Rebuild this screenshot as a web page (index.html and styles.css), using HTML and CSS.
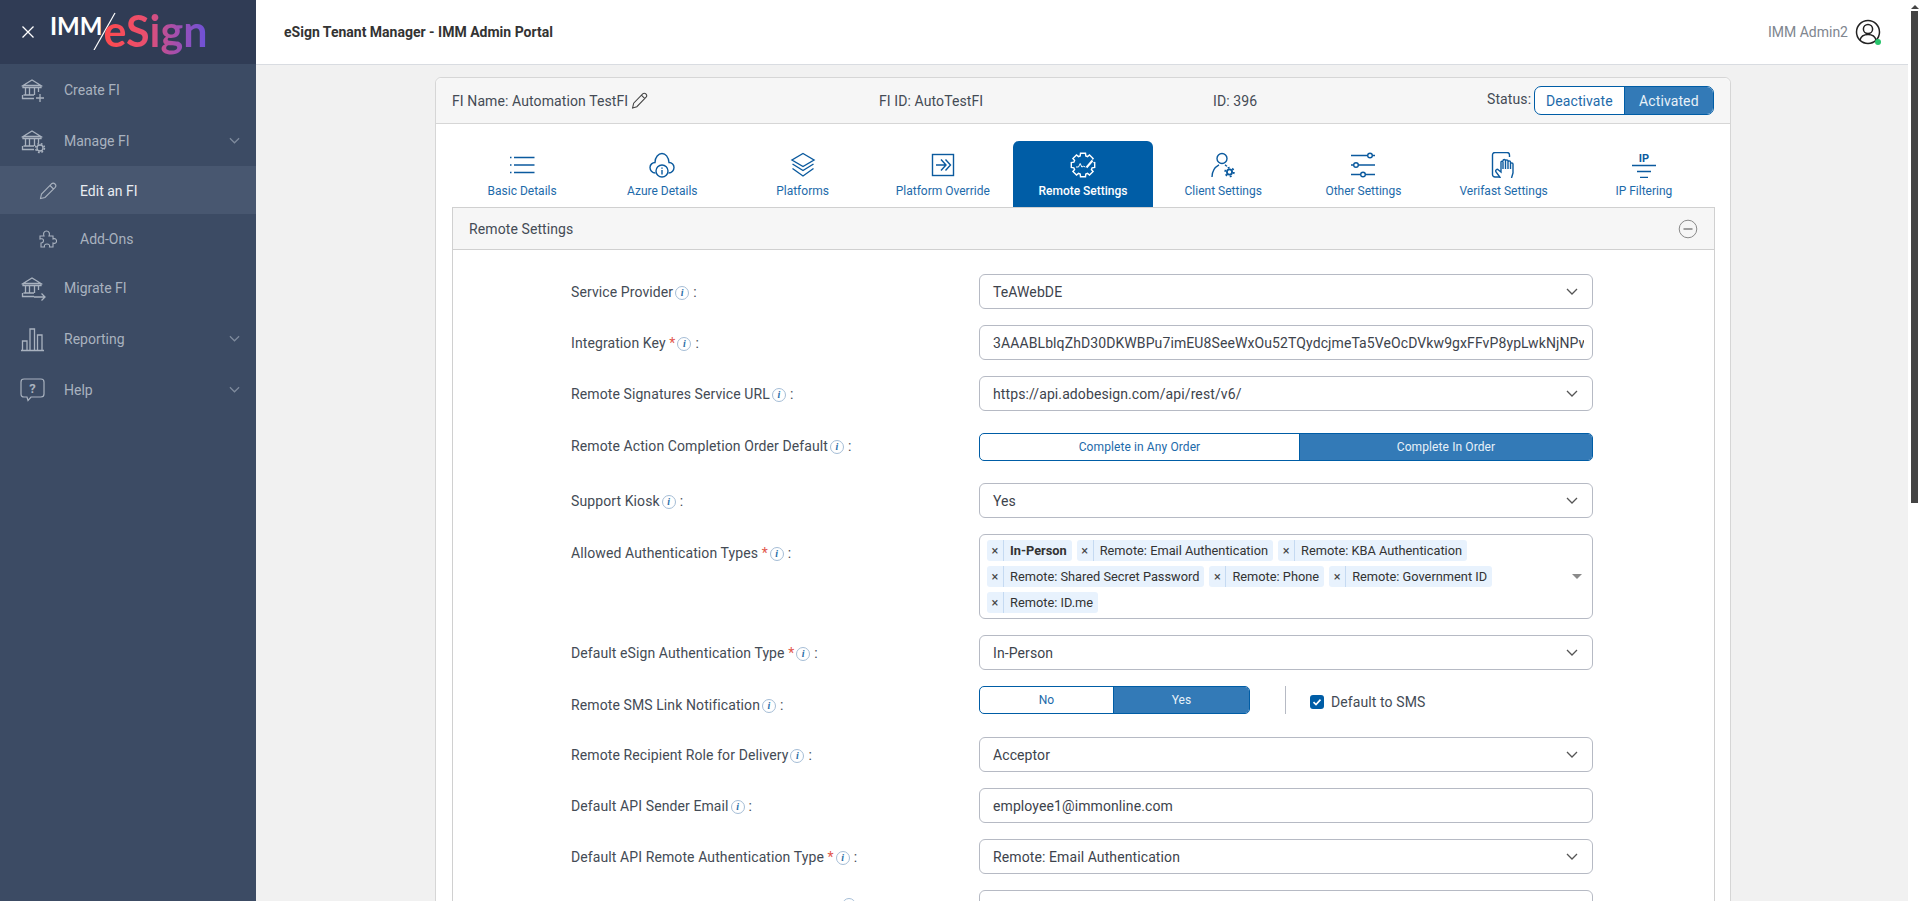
FILE: index.html
```html
<!DOCTYPE html>
<html>
<head>
    <title>eSign Tenant Manager - IMM Admin Portal</title>
    <link rel="stylesheet" href="styles.css">
</head>
<body>
    <svg class="icon-defs" width="0" height="0">
        <symbol id="bank" viewBox="0 0 26 26">
            <path d="M3 8.5 L12 3 L21 8.5 Z M3 8.5 V10.5 H21 V8.5 M5.5 10.5 V18 M9.5 10.5 V18 M14.5 10.5 V18 M18.5 10.5 V15 M3.5 18 H14 M2.5 18 V21.5 H14" fill="none" stroke="currentColor" stroke-width="1.3"/>
        </symbol>
        <symbol id="chevron" viewBox="0 0 12 7">
            <path d="M1 1 L6 6 L11 1" fill="none" stroke="currentColor" stroke-width="1.3"/>
        </symbol>
    </svg>

    <nav class="sidebar">
        <div class="brand">
            <svg class="close-icon" viewBox="0 0 14 14"><path d="M1.5 1.5 L12.5 12.5 M12.5 1.5 L1.5 12.5" stroke="#fff" stroke-width="1.3"/></svg>
            <div class="logo">
                <span class="logo-imm">IMM</span>
                <svg class="logo-slash" viewBox="0 0 23 38"><path d="M1 38 L22 1" stroke="#fff" stroke-width="1.2"/></svg>
                <span class="logo-esign">eSign</span>
            </div>
        </div>
        <a class="nav-item">
            <span class="nav-icon"><svg width="26" height="26" viewBox="0 0 26 26"><use href="#bank"/><path d="M20 17 V25 M16 21 H24" fill="none" stroke="currentColor" stroke-width="1.3"/></svg></span>
            Create FI
        </a>
        <a class="nav-item">
            <span class="nav-icon"><svg width="26" height="26" viewBox="0 0 26 26"><use href="#bank"/><circle cx="20" cy="20" r="3" fill="none" stroke="currentColor" stroke-width="1.3"/><circle cx="20" cy="20" r="4.4" fill="none" stroke="currentColor" stroke-width="1.6" stroke-dasharray="1.8 1.7"/></svg></span>
            Manage FI
            <svg class="nav-chevron"><use href="#chevron"/></svg>
        </a>
        <a class="nav-sub active">
            <span class="nav-sub-icon"><svg width="18" height="18" viewBox="0 0 18 18"><path d="M1.5 16.5 L2.5 12 L12.5 1.8 C13.5 1 15 1 16 2 C17 3 17 4.4 16.2 5.3 L6 15.5 Z M11 3.5 L14.5 7" fill="none" stroke="currentColor" stroke-width="1.1"/></svg></span>
            Edit an FI
        </a>
        <a class="nav-sub">
            <span class="nav-sub-icon"><svg width="18" height="18" viewBox="0 0 18 18"><path d="M1 6 H5 C4 3.5 5 1 7.5 1 C10 1 11 3.5 10 6 H14 V9 C16.5 8 17.5 9.5 17.5 11 C17.5 12.5 16.5 14 14 13 V17 H10.5 C11 15 10 14 8 14 C6 14 5 15 5.5 17 H2 V13 C3.5 13 4.5 12 4.5 10.5 C4.5 9 3.5 8.5 1 9 Z" fill="none" stroke="currentColor" stroke-width="1.1"/></svg></span>
            Add-Ons
        </a>
        <a class="nav-item">
            <span class="nav-icon"><svg width="26" height="26" viewBox="0 0 26 26"><use href="#bank"/><path d="M14 22 H25 M21.5 18.5 L25 22 L21.5 25.5" fill="none" stroke="currentColor" stroke-width="1.3"/></svg></span>
            Migrate FI
        </a>
        <a class="nav-item">
            <span class="nav-icon"><svg width="26" height="26" viewBox="0 0 26 26"><path d="M1 24.5 H24 M2.5 24 V15 H7 V24 M10 24 V3 H14.5 V24 M17.5 24 V9 H22 V24" fill="none" stroke="currentColor" stroke-width="1.3"/></svg></span>
            Reporting
            <svg class="nav-chevron"><use href="#chevron"/></svg>
        </a>
        <a class="nav-item">
            <span class="nav-icon"><svg width="26" height="26" viewBox="0 0 26 26"><path d="M4 2 H21 C23 2 24 3 24 5 V17 C24 19 23 20 21 20 H11 L8 23.5 L7 20 H4 C2 20 1 19 1 17 V5 C1 3 2 2 4 2 Z" fill="none" stroke="currentColor" stroke-width="1.2"/><text x="12.5" y="15.5" class="help-mark">?</text></svg></span>
            Help
            <svg class="nav-chevron"><use href="#chevron"/></svg>
        </a>
    </nav>

    <div class="main">
        <header class="topbar">
            <div class="app-title">eSign Tenant Manager - IMM Admin Portal</div>
            <div class="user">
                <span class="user-name">IMM Admin2</span>
                <span class="user-avatar">
                    <svg width="26" height="26" viewBox="0 0 26 26"><circle cx="13" cy="13" r="11.5" fill="none" stroke="#222" stroke-width="1.5"/><circle cx="13" cy="10" r="4.6" fill="none" stroke="#222" stroke-width="1.5"/><path d="M5 21 C6 17 9 15.5 13 15.5 C17 15.5 20 17 21 21" fill="none" stroke="#222" stroke-width="1.5"/></svg>
                    <span class="user-dot"></span>
                </span>
            </div>
        </header>

        <div class="content">
            <div class="card">
                <div class="card-head">
                    <div class="fi-name">FI Name: Automation TestFI
                        <svg width="17" height="17" viewBox="0 0 16 16"><path d="M1.5 15 L2.5 10.5 L11 1.8 C12 1 13.2 1 14.2 2 C15 3 15 4 14.2 4.8 L5.5 13.8 Z M9.8 3 L13 6.2" fill="none" stroke="#444" stroke-width="1"/></svg>
                    </div>
                    <div>FI ID: AutoTestFI</div>
                    <div>ID: 396</div>
                    <div class="status">
                        <span class="status-label">Status:</span>
                        <div class="toggle status-toggle">
                            <span class="toggle-btn">Deactivate</span>
                            <span class="toggle-btn on">Activated</span>
                        </div>
                    </div>
                </div>

                <div class="tabs">
                    <a class="tab">
                        <svg class="tab-icon" viewBox="0 0 26 26"><path d="M1 5.5 H2.5 M1 13 H2.5 M1 20.5 H2.5 M5 5.5 H25.5 M5 13 H25.5 M5 20.5 H25.5"/></svg>
                        Basic Details
                    </a>
                    <a class="tab">
                        <svg class="tab-icon" viewBox="0 0 26 26"><path d="M6.5 21 C3 21 1 18 1 15.5 C1 12.5 3.5 10.5 6 10.5 C6 5 9.5 1.5 13 1.5 C16.5 1.5 19.5 5 20 10.5 C23 10.5 25 13 25 15.5 C25 18 23 21 19.5 21"/><circle cx="13" cy="19" r="6"/><path d="M13 18 V22.5 M13 15.5 V16.8"/></svg>
                        Azure Details
                    </a>
                    <a class="tab">
                        <svg class="tab-icon" viewBox="0 0 26 26"><path d="M13 1.5 L24 8 L13 14.5 L2 8 Z M2.5 12 L13 18.5 L23.5 12 M2.5 16.5 L13 24 L23.5 16.5"/></svg>
                        Platforms
                    </a>
                    <a class="tab">
                        <svg class="tab-icon" viewBox="0 0 26 26"><rect x="2.5" y="2.5" width="21" height="21"/><path d="M6 13 H15 M11 7.5 L16 13 L11 18.5 M15.5 7.5 L20.5 13 L15.5 18.5"/></svg>
                        Platform Override
                    </a>
                    <a class="tab active">
                        <svg class="tab-icon" viewBox="0 0 26 26"><path d="M10.5 1.3 H15.5 L15.8 3.9 L17.5 4.6 L19.5 2.9 L23.1 6.5 L21.4 8.5 L22.1 10.2 L24.7 10.5 V15.5 L22.1 15.8 L21.4 17.5 L23.1 19.5 L19.5 23.1 L17.5 21.4 L15.8 22.1 L15.5 24.7 H10.5 L10.2 22.1 L8.5 21.4 L6.5 23.1 L2.9 19.5 L4.6 17.5 L3.9 15.8 L1.3 15.5 V10.5 L3.9 10.2 L4.6 8.5 L2.9 6.5 L6.5 2.9 L8.5 4.6 L10.2 3.9 Z"/><path d="M6 15 H8.5 L10.2 11.5 L11.8 15 L13.5 14.3 L15.5 15" stroke-width="1"/><path class="tab-pen-gap" d="M16.5 15.5 L23 8"/><path d="M16.5 15.5 L22.5 8.5" stroke-width="2"/></svg>
                        Remote Settings
                    </a>
                    <a class="tab">
                        <svg class="tab-icon" viewBox="0 0 26 26"><circle cx="12" cy="6.5" r="5"/><path d="M2 25 C2 19.5 5 15 9 12.8 M15 12.8 C15.8 13.3 16.5 13.8 17 14.4"/><circle cx="19.5" cy="20" r="2.6" stroke-width="1.8"/><circle cx="19.5" cy="20" r="4.4" stroke-width="1.7" stroke-dasharray="1.9 2.7"/></svg>
                        Client Settings
                    </a>
                    <a class="tab">
                        <svg class="tab-icon" viewBox="0 0 26 26"><path d="M1 3.5 H25 M1 13 H25 M1 22.5 H25"/><circle class="knob" cx="20" cy="3.5" r="2.3"/><circle class="knob" cx="6" cy="13" r="2.3"/><circle class="knob" cx="13" cy="22.5" r="2.3"/></svg>
                        Other Settings
                    </a>
                    <a class="tab">
                        <svg class="tab-icon" viewBox="0 0 26 26"><path d="M9 25 H4 C2.5 25 1.5 24 1.5 22.5 V3 C1.5 1.5 2.5 .5 4 .5 H16 C17.5 .5 18.5 1.5 18.5 3 V5"/><path d="M9.5 26 L5 20 C4 18 6 16.5 7.5 18 L10 20 V10 C10 8.8 12 8.8 12 10 V17 M12 9 C12 7 14.5 7 14.5 9 V17 M14.5 9 C14.5 7.5 17 7.5 17 9 V17 M17 10 C17 8.5 19.5 8.5 19.5 10 V17 M19.5 12 C19.5 10.5 22 10.5 22 12 V21 L20.5 26"/></svg>
                        Verifast Settings
                    </a>
                    <a class="tab">
                        <svg class="tab-icon" viewBox="0 0 26 26"><text x="13" y="9.5" class="ip-mark">IP</text><path d="M1 13.5 H25 M6 19.5 H20 M9 25.5 H17"/></svg>
                        IP Filtering
                    </a>
                </div>

                <section class="panel">
                    <div class="panel-head">
                        <span>Remote Settings</span>
                        <svg width="20" height="20" viewBox="0 0 20 20"><circle cx="10" cy="10" r="8.8" fill="none" stroke="#8a8a8a" stroke-width="1"/><path d="M5.5 10 H14.5" stroke="#8a8a8a" stroke-width="1.6"/></svg>
                    </div>
                    <div class="panel-body">
                        <div class="form-row">
                            <label>Service Provider<span class="info">i</span>:</label>
                            <div class="select">TeAWebDE<svg class="select-chevron"><use href="#chevron"/></svg></div>
                        </div>
                        <div class="form-row">
                            <label>Integration Key <span class="req">*</span><span class="info">i</span>:</label>
                            <div class="input"><span class="input-text">3AAABLblqZhD30DKWBPu7imEU8SeeWxOu52TQydcjmeTa5VeOcDVkw9gxFFvP8ypLwkNjNPw</span></div>
                        </div>
                        <div class="form-row">
                            <label>Remote Signatures Service URL<span class="info">i</span>:</label>
                            <div class="select">https://api.adobesign.com/api/rest/v6/<svg class="select-chevron"><use href="#chevron"/></svg></div>
                        </div>
                        <div class="form-row toggle-row">
                            <label>Remote Action Completion Order Default<span class="info">i</span>:</label>
                            <div class="toggle wide-toggle">
                                <span class="toggle-btn">Complete in Any Order</span>
                                <span class="toggle-btn on">Complete In Order</span>
                            </div>
                        </div>
                        <div class="form-row">
                            <label>Support Kiosk<span class="info">i</span>:</label>
                            <div class="select">Yes<svg class="select-chevron"><use href="#chevron"/></svg></div>
                        </div>
                        <div class="form-row multi-row">
                            <label>Allowed Authentication Types <span class="req">*</span><span class="info">i</span>:</label>
                            <div class="multi">
                                <div class="tags">
                                    <span class="tag"><span class="tag-x">×</span><b>In-Person</b></span>
                                    <span class="tag"><span class="tag-x">×</span><span class="tag-text">Remote: Email Authentication</span></span>
                                    <span class="tag"><span class="tag-x">×</span><span class="tag-text">Remote: KBA Authentication</span></span>
                                    <span class="tag"><span class="tag-x">×</span><span class="tag-text">Remote: Shared Secret Password</span></span>
                                    <span class="tag"><span class="tag-x">×</span><span class="tag-text">Remote: Phone</span></span>
                                    <span class="tag"><span class="tag-x">×</span><span class="tag-text">Remote: Government ID</span></span>
                                    <span class="tag"><span class="tag-x">×</span><span class="tag-text">Remote: ID.me</span></span>
                                </div>
                                <span class="multi-caret"></span>
                            </div>
                        </div>
                        <div class="form-row">
                            <label>Default eSign Authentication Type <span class="req">*</span><span class="info">i</span>:</label>
                            <div class="select">In-Person<svg class="select-chevron"><use href="#chevron"/></svg></div>
                        </div>
                        <div class="form-row">
                            <label class="sms-label">Remote SMS Link Notification<span class="info">i</span>:</label>
                            <div class="sms-controls">
                                <div class="toggle sms-toggle">
                                    <span class="toggle-btn">No</span>
                                    <span class="toggle-btn on">Yes</span>
                                </div>
                                <div class="sms-check">
                                    <span class="checkbox"><svg width="10" height="10" viewBox="0 0 10 10"><path d="M1.5 5.2 L4 7.6 L8.5 2.6" fill="none" stroke="#fff" stroke-width="1.6"/></svg></span>
                                    Default to SMS
                                </div>
                            </div>
                        </div>
                        <div class="form-row">
                            <label>Remote Recipient Role for Delivery<span class="info">i</span>:</label>
                            <div class="select">Acceptor<svg class="select-chevron"><use href="#chevron"/></svg></div>
                        </div>
                        <div class="form-row">
                            <label>Default API Sender Email<span class="info">i</span>:</label>
                            <div class="input">employee1@immonline.com</div>
                        </div>
                        <div class="form-row">
                            <label>Default API Remote Authentication Type <span class="req">*</span><span class="info">i</span>:</label>
                            <div class="select">Remote: Email Authentication<svg class="select-chevron"><use href="#chevron"/></svg></div>
                        </div>
                        <div class="form-row">
                            <label class="cut-label"><span class="info"></span></label>
                            <div class="select"></div>
                        </div>
                    </div>
                </section>
            </div>
        </div>
    </div>

    <div class="scrollbar">
        <span class="scroll-arrow"></span>
        <span class="scroll-thumb"></span>
    </div>
</body>
</html>
```

FILE: styles.css
```css
* {
    box-sizing: border-box;
}
html, body {
    height: 100%;
}
body {
    font-family: Roboto, Arial, sans-serif;
    font-size: 14px;
    background-color: #f1f1f1;
    margin: 0;
    display: flex;
    height: 901px;
    overflow: hidden;
    color: #444b55;
}
.icon-defs {
    display: block;
    position: absolute;
}

/* sidebar */
.sidebar {
    width: 256px;
    flex: none;
    background-color: #3c4b64;
    color: #a9b2bf;
}
.brand {
    height: 64px;
    background-color: #303c55;
    display: flex;
    align-items: center;
    padding-left: 21px;
}
.close-icon {
    width: 14px;
    height: 14px;
    flex: none;
    margin-right: 15px;
}
.logo {
    display: flex;
    align-items: center;
    height: 64px;
}
.logo-imm {
    font-family: Lato, sans-serif;
    font-weight: 700;
    font-size: 24px;
    line-height: 24px;
    color: #fff;
    margin-top: -13px;
}
.logo-slash {
    width: 23px;
    height: 38px;
    margin: -3px -13px 0 -9px;
    flex: none;
}
.logo-esign {
    font-family: Lato, sans-serif;
    font-weight: 700;
    font-size: 43px;
    line-height: 50px;
    margin-top: -2px;
    background: linear-gradient(90deg, #ff4a4c 0%, #e94f6e 40%, #a44fae 70%, #6c52d8 100%);
    -webkit-background-clip: text;
    background-clip: text;
    color: transparent;
}
.nav-item {
    display: flex;
    align-items: center;
    height: 51px;
    padding: 0 16px 0 20px;
}
.nav-icon {
    width: 44px;
    flex: none;
    display: flex;
}
.nav-chevron {
    width: 11px;
    height: 7px;
    margin-left: auto;
    color: #7f8b9d;
}
.nav-sub {
    display: flex;
    align-items: center;
    height: 48px;
    padding: 1px 0 0 39px;
}
.nav-sub.active {
    background-color: #485770;
    color: #e9edf2;
}
.nav-sub.active .nav-sub-icon {
    color: #a9b2bf;
}
.nav-sub-icon {
    width: 41px;
    flex: none;
    display: flex;
}

/* top bar */
.main {
    width: 1652px;
    flex: none;
    display: flex;
    flex-direction: column;
    overflow: hidden;
}
.topbar {
    height: 65px;
    flex: none;
    background-color: #fff;
    border-bottom: 1px solid #d9dce1;
    display: flex;
    align-items: center;
    justify-content: space-between;
    padding: 0 27px 0 28px;
}
.app-title {
    font-size: 14px;
    font-weight: 700;
    color: #333;
}
.user {
    display: flex;
    align-items: center;
    gap: 7px;
}
.user-name {
    color: #80868f;
}
.user-avatar {
    display: flex;
    position: relative;
}
.user-dot {
    position: absolute;
    right: 0;
    bottom: 0;
    width: 6px;
    height: 6px;
    border-radius: 50%;
    background-color: #27c46b;
}

/* card */
.content {
    padding: 12px 177px 0 179px;
}
.card {
    background-color: #fff;
    border: 1px solid #d6d6d6;
    border-radius: 6px;
    padding: 0 16px;
}
.card-head {
    height: 46px;
    margin: 0 -16px;
    padding: 0 16px;
    background-color: #f6f6f6;
    border-bottom: 1px solid #d6d6d6;
    border-radius: 6px 6px 0 0;
    display: grid;
    grid-template-columns: 427px 334px 274px 1fr;
    align-items: center;
    letter-spacing: .1px;
}
.fi-name {
    display: flex;
    align-items: center;
    gap: 3px;
}
.status {
    display: flex;
    align-items: center;
    justify-content: flex-end;
    gap: 3px;
}
.status-label {
    margin-top: -4px;
}

/* toggles */
.toggle {
    display: flex;
    height: 28px;
    border: 1px solid #005da6;
    border-radius: 5px;
    overflow: hidden;
    font-size: 12px;
    background-color: #fff;
    color: #1d6aaa;
}
.toggle-btn {
    flex: 1;
    display: flex;
    align-items: center;
    justify-content: center;
}
.toggle-btn.on {
    background-color: #337ab7;
    color: #e8f1f8;
    border-left: 1px solid #005da6;
}
.status-toggle {
    width: 180px;
    height: 29px;
    font-size: 14px;
    border-radius: 7px;
}
.wide-toggle {
    align-self: start;
}
.wide-toggle .toggle-btn:first-child {
    flex: none;
    width: 319px;
}
.sms-toggle {
    width: 271px;
}
.sms-toggle .toggle-btn:first-child {
    flex: none;
    width: 133px;
}

/* tabs */
.tabs {
    display: flex;
    padding-top: 17px;
}
.tab {
    flex: 1;
    height: 66px;
    padding-top: 11px;
    display: flex;
    flex-direction: column;
    align-items: center;
    font-size: 12px;
    line-height: 16px;
    color: #1d6aaa;
    border-radius: 6px 6px 0 0;
}
.tab-icon {
    width: 26px;
    height: 26px;
    margin-bottom: 5px;
    fill: none;
    stroke: #0b5a9e;
    stroke-width: 1.4;
}
.tab.active {
    background-color: #005da6;
    color: #fff;
    font-weight: 500;
}
.tab.active .tab-icon {
    stroke: #fff;
}
.tab.active .tab-pen-gap {
    stroke: #005da6;
    stroke-width: 4;
}
.knob {
    fill: #fff;
}
.ip-mark {
    font-family: Roboto, Arial, sans-serif;
    font-size: 11px;
    font-weight: 700;
    fill: #0b5a9e;
    stroke: none;
    text-anchor: middle;
}
.help-mark {
    font-family: Roboto, Arial, sans-serif;
    font-size: 13px;
    font-weight: 700;
    fill: currentColor;
    text-anchor: middle;
}

/* panel */
.panel {
    border: 1px solid #d0d0d0;
    border-bottom: 0;
    margin-right: -1px;
    letter-spacing: .1px;
}
.panel-head {
    height: 42px;
    background-color: #f6f6f6;
    border-bottom: 1px solid #d0d0d0;
    display: flex;
    align-items: center;
    justify-content: space-between;
    padding: 0 16px 0 16px;
}
.panel-body {
    padding: 24px 0 0 118px;
}
.form-row {
    display: grid;
    grid-template-columns: 408px 614px;
    align-items: center;
    min-height: 35px;
    margin-bottom: 16px;
}
.form-row label {
    display: block;
    line-height: 20px;
}
.info {
    display: inline-block;
    width: 14px;
    height: 14px;
    margin: 0 4px 0 2px;
    border: 1px solid #a5bdd6;
    border-radius: 50%;
    font-family: "Liberation Serif", serif;
    font-style: italic;
    font-weight: 700;
    font-size: 10px;
    line-height: 12px;
    text-align: center;
    color: #2a6ea8;
    vertical-align: 1px;
}
.req {
    color: #e2574c;
}
.select, .input {
    height: 35px;
    border: 1px solid #b6bac4;
    border-radius: 6px;
    background-color: #fff;
    padding: 0 14px 0 13px;
    display: flex;
    align-items: center;
    justify-content: space-between;
    color: #3d434c;
    white-space: nowrap;
    overflow: hidden;
}
.input {
    padding-right: 8px;
}
.input-text {
    overflow: hidden;
}
.select-chevron {
    width: 12px;
    height: 7px;
    color: #555;
    flex: none;
}
.toggle-row {
    min-height: 40px;
    padding-top: 6px;
}
.form-row.toggle-row label {
    margin-top: -9px;
}
.multi-row {
    align-items: start;
}
.form-row.multi-row label {
    margin-top: 9px;
}
.multi {
    height: 85px;
    border: 1px solid #b6bac4;
    border-radius: 6px;
    display: flex;
    align-items: center;
    padding: 0 8px 0 7px;
    letter-spacing: 0;
}
.tags {
    flex: 1;
    display: flex;
    flex-wrap: wrap;
    gap: 5px;
}
.tag {
    display: flex;
    height: 21px;
    align-items: center;
    background-color: #e8f2fd;
    border-radius: 3px;
    font-size: 12.8px;
    color: #333;
}
.tag-x {
    width: 17px;
    height: 21px;
    line-height: 21px;
    text-align: center;
    border-right: 1px solid #c5daf2;
    margin-right: 6px;
    color: #444;
}
.tag b {
    margin-right: 5px;
}
.tag-text {
    margin-right: 5px;
}
.multi-caret {
    width: 0;
    height: 0;
    border-left: 5px solid transparent;
    border-right: 5px solid transparent;
    border-top: 5px solid #8a8a8a;
    margin-right: 2px;
}
.sms-controls {
    display: flex;
    align-self: start;
}
.form-row .sms-label {
    margin-top: 2px;
}
.sms-check {
    display: flex;
    align-items: center;
    gap: 7px;
    height: 28px;
    margin-left: 35px;
    padding-left: 24px;
    border-left: 1px solid #b6bac4;
    padding-top: 3px;
}
.checkbox {
    width: 14px;
    height: 14px;
    border-radius: 3px;
    background-color: #005da6;
    display: flex;
    align-items: center;
    justify-content: center;
}
.cut-label {
    padding-left: 269px;
}

/* page scrollbar */
.scrollbar {
    width: 12px;
    flex: none;
    background-color: #fff;
    padding-left: 3px;
    display: flex;
    flex-direction: column;
}
.scroll-arrow {
    width: 0;
    height: 0;
    margin: 5px 0 2px 0;
    border-left: 4px solid transparent;
    border-right: 4px solid transparent;
    border-bottom: 4px solid #444;
}
.scroll-thumb {
    width: 7px;
    height: 492px;
    background-color: #444;
}
```
